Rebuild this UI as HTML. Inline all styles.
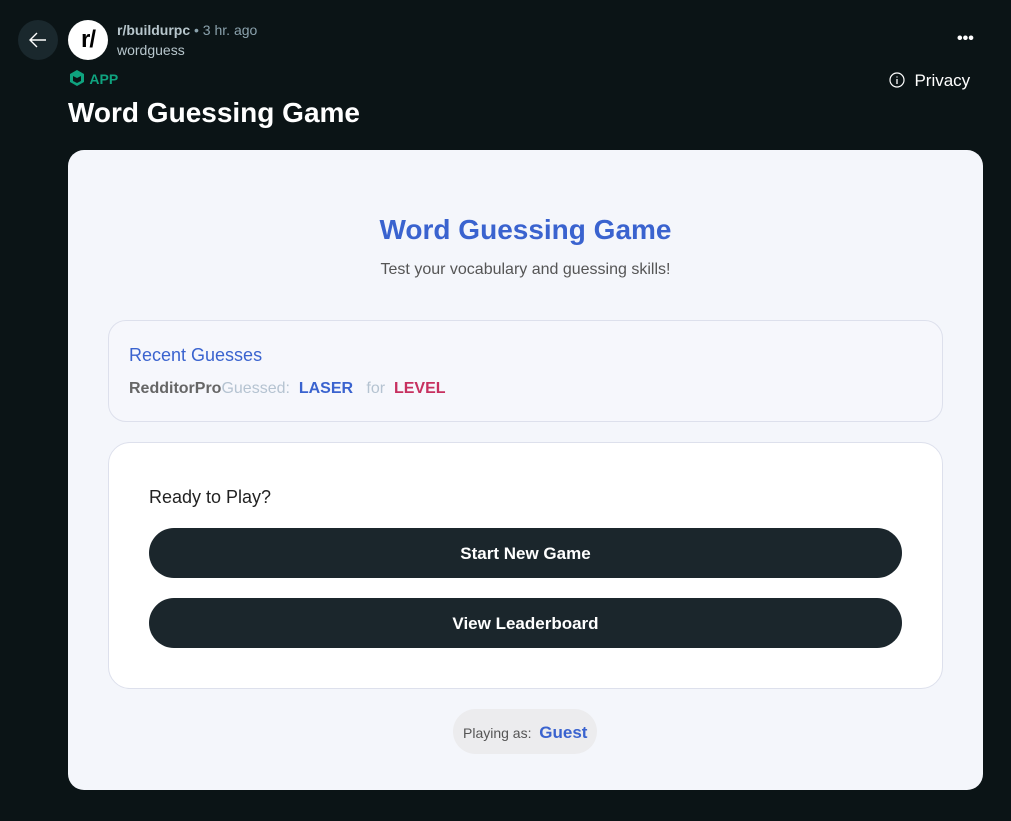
<!DOCTYPE html>
<html><head><meta charset="utf-8"><style>
*{box-sizing:border-box;margin:0;padding:0}
body{width:1011px;height:821px;background:#0b1416;font-family:"Liberation Sans",sans-serif;position:relative;overflow:hidden;color:#fff}
.abs{position:absolute}
.back{left:18px;top:20px;width:40px;height:40px;border-radius:50%;background:#1a282d}
.av{left:68px;top:20px;width:40px;height:40px;border-radius:50%;background:#fff;color:#000;font-weight:bold;font-size:24px;text-align:center;line-height:40px;letter-spacing:-1px}
.card{left:68px;top:150px;width:915px;height:640px;background:#f4f6fb;border-radius:16px}
.btn{position:absolute;left:149px;width:753px;height:50px;border-radius:25px;background:#1b262c;color:#fff;font-weight:bold;font-size:17px;text-align:center;line-height:52px}
</style></head><body>
<div class="abs back"><svg width="40" height="40" viewBox="0 0 40 40"><path d="M28 20H12M19 13l-7 7 7 7" stroke="#fff" stroke-width="1.4" fill="none"/></svg></div>
<div class="abs av">r/</div>
<div class="abs" style="left:117px;top:22px;font-size:14px;color:#b7c6cc"><b style="color:#b7c6cc">r/buildurpc</b> <span style="color:#8ba2ad">• 3 hr. ago</span></div>
<div class="abs" style="left:117px;top:42px;font-size:14px;color:#b7c6cc">wordguess</div>
<div class="abs" style="left:68px;top:69px;font-size:14px;color:#0fa37f;font-weight:bold"><svg width="18" height="18" viewBox="0 0 18 18" style="vertical-align:-3px"><path d="M9 1l7 4v8l-7 4-7-4V5z" fill="#0fa37f"/><path d="M5 7l4 2 4-2v5l-4 2-4-2z" fill="#0b1416"/></svg> APP</div>
<div class="abs" style="left:68px;top:97px;font-size:28px;font-weight:bold">Word Guessing Game</div>
<div class="abs" style="left:957px;top:30px;font-size:16px;font-weight:bold;letter-spacing:0px">•••</div>
<div class="abs" style="left:889px;top:71px;font-size:17px"><svg width="16" height="16" viewBox="0 0 16 16" style="vertical-align:-2px"><circle cx="8" cy="8" r="7" stroke="#fff" fill="none" stroke-width="1.2"/><path d="M8 7v5M8 4.5v1" stroke="#fff" stroke-width="1.3"/></svg>&nbsp; Privacy</div>
<div class="abs card"></div>
<div class="abs" style="left:68px;width:915px;top:214px;text-align:center;font-size:28px;color:#3a63cf;font-weight:bold">Word Guessing Game</div>
<div class="abs" style="left:68px;width:915px;top:261px;text-align:center;font-size:16px;color:#555">Test your vocabulary and guessing skills!</div>
<div class="abs" style="left:108px;top:320px;width:835px;height:102px;border:1px solid #dde0ec;border-radius:18px;background:#f6f7fc"></div>
<div class="abs" style="left:129px;top:345px;font-size:18px;color:#3a63cf">Recent Guesses</div>
<div class="abs" style="left:129px;top:380px;font-size:16px;font-weight:bold;color:#666">RedditorPro<span style="font-weight:normal;color:#b5c3d1">Guessed:&nbsp;&nbsp;</span><span style="color:#3a63cf">LASER</span><span style="font-weight:normal;color:#b5c3d1">&nbsp;&nbsp; for &nbsp;</span><span style="color:#c7305f">LEVEL</span></div>
<div class="abs" style="left:108px;top:442px;width:835px;height:247px;border:1px solid #dde0ec;border-radius:22px;background:#fff"></div>
<div class="abs" style="left:149px;top:487px;font-size:18px;color:#222">Ready to Play?</div>
<div class="btn" style="top:528px">Start New Game</div>
<div class="btn" style="top:598px">View Leaderboard</div>
<div class="abs" style="left:453px;top:709px;width:144px;height:45px;border-radius:23px;background:#ececee;font-size:14px;color:#555;line-height:47px;padding-left:10px">Playing as:&nbsp; <span style="color:#3a63cf;font-size:17px;font-weight:bold">Guest</span></div>
</body></html>
